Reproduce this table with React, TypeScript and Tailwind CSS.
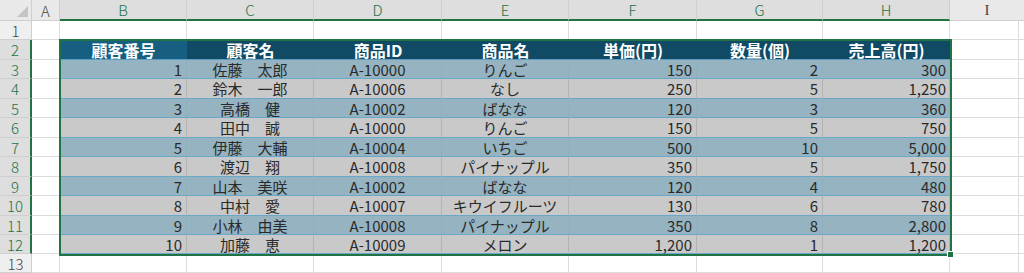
import React from "react";

const colLetters = ["B", "C", "D", "E", "F", "G", "H"];
const colWidths = ["w-[127px]", "w-[127px]", "w-[128px]", "w-[127px]", "w-[128px]", "w-[126px]", "w-[127px]"];
// row 1 .. row 13
const rowHeights = [
  "h-[19px]", "h-[20px]", "h-[19px]", "h-[20px]", "h-[19px]", "h-[20px]", "h-[19px]",
  "h-[20px]", "h-[19px]", "h-[20px]", "h-[19px]", "h-[19px]", "h-[19px]",
];

const headers = ["顧客番号", "顧客名", "商品ID", "商品名", "単価(円)", "数量(個)", "売上高(円)"];
// alignment per column
const aligns = ["justify-end pr-[4px]", "justify-center", "justify-center", "justify-center", "justify-end pr-[4px]", "justify-end pr-[4px]", "justify-end pr-[3px]"];

const data: string[][] = [
  ["1", "佐藤　太郎", "A-10000", "りんご", "150", "2", "300"],
  ["2", "鈴木　一郎", "A-10006", "なし", "250", "5", "1,250"],
  ["3", "高橋　健", "A-10002", "ばなな", "120", "3", "360"],
  ["4", "田中　誠", "A-10000", "りんご", "150", "5", "750"],
  ["5", "伊藤　大輔", "A-10004", "いちご", "500", "10", "5,000"],
  ["6", "渡辺　翔", "A-10008", "パイナップル", "350", "5", "1,750"],
  ["7", "山本　美咲", "A-10002", "ばなな", "120", "4", "480"],
  ["8", "中村　愛", "A-10007", "キウイフルーツ", "130", "6", "780"],
  ["9", "小林　由美", "A-10008", "パイナップル", "350", "8", "2,800"],
  ["10", "加藤　恵", "A-10009", "メロン", "1,200", "1", "1,200"],
];

function RowHeader({ n, selected }: { n: number; selected: boolean }) {
  return selected ? (
    <div className="w-[32px] shrink-0 flex items-center justify-center bg-[#dedede] border-b border-[#cfcfcf] border-r-2 border-r-[#217346] text-[15px] font-light text-[#217346]">
      {n}
    </div>
  ) : (
    <div className="w-[32px] shrink-0 flex items-center justify-center bg-[#efefef] border-b border-r border-[#cfcfcf] text-[15px] font-light text-[#444]">
      {n}
    </div>
  );
}

function BlankCell({ w }: { w: string }) {
  return <div className={`${w} shrink-0 border-r border-b border-[#dcdcdc]`} />;
}

function TableRow({ r }: { r: number }) {
  // r = 0 header row, 1..10 data rows
  if (r === 0) {
    return (
      <>
        {headers.map((h, i) => (
          <div
            key={h}
            className={`${colWidths[i]} shrink-0 flex items-center justify-center border-b border-[#5d9cc0] text-[16px] leading-[18px] font-bold text-white ${
              i === 0 ? "bg-[#165f80]" : "bg-[#104a64]"
            }`}
          >
            {h}
          </div>
        ))}
      </>
    );
  }
  const odd = r % 2 === 1;
  return (
    <>
      {data[r - 1].map((v, i) => (
        <div
          key={i}
          className={`${colWidths[i]} shrink-0 flex items-center ${aligns[i]} border-b border-[#6aa8c9] text-[15px] leading-[17px] text-[#2a2a2a] ${
            odd ? "bg-[#95b3c1] border-r border-r-[#8fb0bf]" : "bg-[#c9c9c9] border-r border-r-[#b3b3b3]"
          }`}
        >
          {v}
        </div>
      ))}
    </>
  );
}

export default function App() {
  return (
    <div className="relative w-[1024px] h-[273px] overflow-hidden bg-white font-['Noto_Sans_CJK_JP','Noto_Sans',sans-serif] leading-none">
      {/* column headers */}
      <div className="flex h-[21px]">
        <div className="relative w-[32px] shrink-0 bg-[#e9e9e9] border-r border-b border-[#cfcfcf]">
          <svg className="absolute right-[3px] bottom-[3px]" width="11" height="11" viewBox="0 0 11 11">
            <polygon points="11,0 11,11 0,11" fill="#c4c4c4" />
          </svg>
        </div>
        <div className="w-[28px] shrink-0 flex items-center justify-center bg-[#e9e9e9] border-r border-b border-[#cfcfcf] text-[15px] font-light text-[#444]">
          A
        </div>
        {colLetters.map((c, i) => (
          <div
            key={c}
            className={`${colWidths[i]} shrink-0 flex items-center justify-center bg-[#dedede] border-r border-r-[#cfcfcf] border-b-2 border-b-[#217346] text-[15px] font-light text-[#217346]`}
          >
            {c}
          </div>
        ))}
        <div className="flex-1 flex items-center justify-center bg-[#e9e9e9] border-b border-[#cfcfcf] text-[15px] text-[#444] font-['Liberation_Serif',serif]">
          I
        </div>
      </div>

      {rowHeights.map((h, idx) => {
        const n = idx + 1;
        const inTable = n >= 2 && n <= 12;
        return (
          <div key={n} className={`flex ${h}`}>
            <RowHeader n={n} selected={inTable} />
            <BlankCell w="w-[28px]" />
            {inTable ? <TableRow r={n - 2} /> : colWidths.map((w, i) => <BlankCell key={i} w={w} />)}
            <div className="flex-1 border-b border-[#dcdcdc]">
              <div className="w-[69px] h-full border-r border-[#dcdcdc]" />
            </div>
          </div>
        );
      })}

      {/* selection outline */}
      <div className="pointer-events-none absolute left-[59px] top-[39px] w-[893px] h-[217px] border-2 border-[#217346]" />
      <div className="pointer-events-none absolute left-[947px] top-[251px] w-[7px] h-[7px] bg-[#217346] border border-white" />
    </div>
  );
}
